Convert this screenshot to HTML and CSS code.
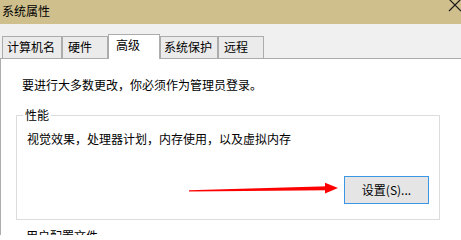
FILE: index.html
```html
<!DOCTYPE html>
<html lang="zh-CN">
<head>
<meta charset="utf-8">
<title>系统属性</title>
<link rel="stylesheet" href="styles.css">
</head>
<body>
<div class="window">
  <div class="titlebar">
    <span class="title">系统属性</span>
    <svg class="close" width="14" height="24" viewBox="0 0 14 24" aria-hidden="true">
      <path d="M2,-1 L14,11 M2,11 L14,-1" stroke="#1a1a1a" stroke-width="1.2" fill="none"/>
    </svg>
  </div>
  <div class="tabstrip">
    <div class="tab t1">计算机名</div>
    <div class="tab t2">硬件</div>
    <div class="tab t3 selected">高级</div>
    <div class="tab t4">系统保护</div>
    <div class="tab t5">远程</div>
  </div>
  <div class="panel">
    <p class="intro">要进行大多数更改，你必须作为管理员登录。</p>
    <div class="group">
      <div class="group-label">性能</div>
      <p class="group-text">视觉效果，处理器计划，内存使用，以及虚拟内存</p>
      <div class="btn-row">
        <button class="btn">设置(S)...</button>
      </div>
    </div>
    <div class="next-label">用户配置文件</div>
  </div>
</div>
<svg class="arrow" width="165" height="20" viewBox="180 178 165 20" aria-hidden="true">
  <polygon points="189,190.2 328,186.2 328,190.2 189,191.4" fill="#ff0000"/>
  <polygon points="325,182.8 338,188 325,193.4" fill="#ff0000"/>
</svg>
</body>
</html>
```

FILE: styles.css
```css
html, body {
  margin: 0;
  padding: 0;
  background: #ffffff;
  overflow: hidden;
}
body {
  width: 461px;
  height: 235px;
  font-family: "Noto Sans CJK SC", "Microsoft YaHei", sans-serif;
  font-size: 12px;
  color: #000000;
  position: relative;
}
.window {
  width: 461px;
  height: 235px;
  overflow: hidden;
}
.titlebar {
  height: 24px;
  background: #cfbf8d;
  display: flex;
  align-items: flex-start;
}
.title {
  padding: 1px 0 0 2px;
  line-height: 20px;
}
.close {
  margin-left: auto;
  display: block;
}
.tabstrip {
  height: 34px;
  background: #f0f0f0;
  border-bottom: 1px solid #acacac;
  display: flex;
  align-items: flex-end;
  padding-left: 2px;
}
.tab {
  box-sizing: border-box;
  height: 22px;
  border: 1px solid #acacac;
  border-bottom: none;
  background: #ebebeb;
  line-height: 20px;
  padding-left: 4px;
  white-space: nowrap;
}
.t1 { width: 60px; }
.t2 { width: 46px; padding-left: 5px; }
.t3 { width: 52px; }
.t4 { width: 58px; padding-left: 3px; }
.t5 { width: 46px; padding-left: 5px; }
.tab.selected {
  height: 25px;
  margin-bottom: -1px;
  background: #ffffff;
  padding-left: 7px;
  line-height: 19px;
  position: relative;
}
.panel {
  border-left: 1px solid #acacac;
  background: #ffffff;
  height: 176px;
}
.intro {
  margin: 0;
  padding: 18px 0 0 21px;
  line-height: 16px;
}
.group {
  box-sizing: border-box;
  margin: 22px 0 0 15px;
  width: 424px;
  height: 105px;
  border: 1px solid #dcdcdc;
}
.group-label {
  width: fit-content;
  margin: -9px 0 0 6px;
  padding: 0 2px;
  background: #ffffff;
  line-height: 16px;
}
.group-text {
  margin: 8px 0 0 10px;
  line-height: 16px;
}
.btn-row {
  display: flex;
  justify-content: flex-end;
  padding-right: 10px;
  margin-top: 29px;
}
.btn {
  box-sizing: border-box;
  width: 85px;
  height: 28px;
  border: 1px solid #3c96e6;
  background: #e5e5e5;
  font-family: "Noto Sans CJK SC", "Microsoft YaHei", sans-serif;
  font-size: 12px;
  color: #000000;
  padding: 0;
  line-height: 26px;
}
.next-label {
  margin: 8px 0 0 25px;
  line-height: 16px;
}
.arrow {
  position: absolute;
  left: 180px;
  top: 178px;
}
```
